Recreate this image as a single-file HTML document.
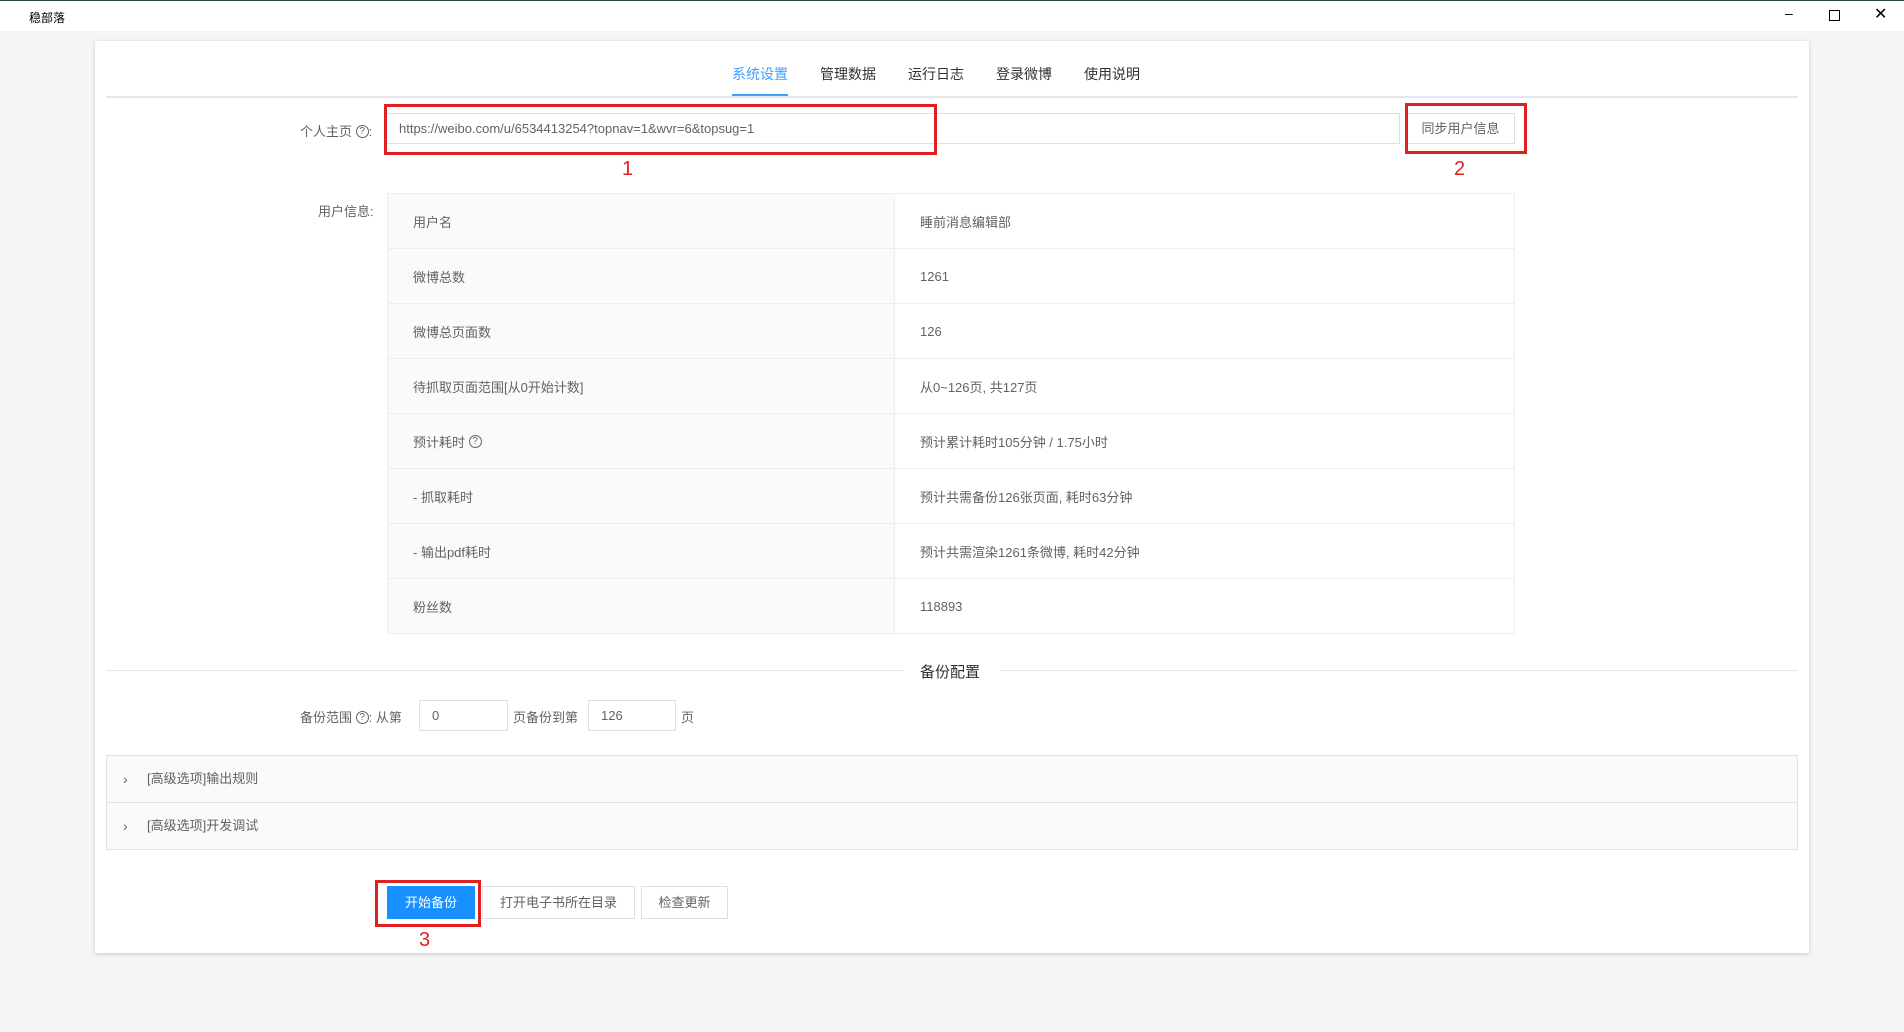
<!DOCTYPE html>
<html><head><meta charset="utf-8"><style>
*{box-sizing:border-box;margin:0;padding:0}
body{width:1904px;height:1032px;background:#f5f5f5;font-family:"Liberation Sans","Noto Sans CJK SC",sans-serif;color:#606266;font-size:13px;position:relative;overflow:hidden}
.abs{position:absolute}
.title{left:0;top:0;width:1904px;height:31px;background:#fff;border-top:1px solid #2d4a3a}
.card{left:95px;top:41px;width:1714px;height:912px;background:#fff;box-shadow:0 1px 4px rgba(0,0,0,.18)}
.tab{top:64px;font-size:14px;color:#303133}
.in{border:1px solid #dcdfe6;background:#fff;height:31px;line-height:29px;padding-left:12px;color:#606266;font-size:13px}
.red{border:3px solid #e02020}
.num{color:#e02020;font-size:20px}
table{border-collapse:collapse}
td{border:1px solid #ebeef5;height:55px;padding-left:25px;font-size:13px;color:#606266}
td.k{background:#fafafa;width:507px}
.q{display:inline-block;width:13px;height:13px;border:1px solid #606266;border-radius:50%;font-size:10px;line-height:11px;text-align:center;vertical-align:middle;margin-top:-3px}
.panel{left:106px;width:1692px;height:48px;background:#fafafa;border:1px solid #e0e0e0;line-height:46px;padding-left:40px;color:#606266;font-size:13px}
.btn{top:886px;height:33px;line-height:31px;border:1px solid #dcdfe6;background:#fff;text-align:center;font-size:13px;color:#606266}
</style></head><body>
<div class="abs title"><span class="abs" style="left:29px;top:8px;font-size:12px;color:#000">稳部落</span>
<span class="abs" style="left:1785px;top:4px;font-size:14px;color:#000">–</span>
<span class="abs" style="left:1829px;top:9px;width:11px;height:11px;border:1px solid #000"></span>
<span class="abs" style="left:1874px;top:3px;font-size:16px;color:#000">✕</span></div>
<div class="abs card"></div>
<span class="abs tab" style="left:732px;color:#409eff">系统设置</span>
<div class="abs" style="left:732px;top:94px;width:56px;height:3px;background:#409eff"></div>
<span class="abs tab" style="left:820px">管理数据</span>
<span class="abs tab" style="left:908px">运行日志</span>
<span class="abs tab" style="left:996px">登录微博</span>
<span class="abs tab" style="left:1084px">使用说明</span>
<div class="abs" style="left:106px;top:96px;width:1692px;height:2px;background:#e4e7ed"></div>

<span class="abs" style="left:300px;top:121px">个人主页 <span class="q">?</span>:</span>
<div class="abs in" style="left:386px;top:113px;width:1014px">https://weibo.com/u/6534413254?topnav=1&amp;wvr=6&amp;topsug=1</div>
<div class="abs in" style="left:1406px;top:113px;width:109px;padding:0;text-align:center">同步用户信息</div>
<div class="abs red" style="left:384px;top:104px;width:553px;height:51px"></div>
<div class="abs red" style="left:1405px;top:103px;width:122px;height:51px"></div>
<span class="abs num" style="left:622px;top:158px">1</span>
<span class="abs num" style="left:1454px;top:158px">2</span>

<span class="abs" style="left:318px;top:201px">用户信息:</span>
<table class="abs" style="left:387px;top:193px;width:1128px">
<tr><td class="k">用户名</td><td>睡前消息编辑部</td></tr>
<tr><td class="k">微博总数</td><td>1261</td></tr>
<tr><td class="k">微博总页面数</td><td>126</td></tr>
<tr><td class="k">待抓取页面范围[从0开始计数]</td><td>从0~126页, 共127页</td></tr>
<tr><td class="k">预计耗时 <span class="q">?</span></td><td>预计累计耗时105分钟 / 1.75小时</td></tr>
<tr><td class="k">- 抓取耗时</td><td>预计共需备份126张页面, 耗时63分钟</td></tr>
<tr><td class="k">- 输出pdf耗时</td><td>预计共需渲染1261条微博, 耗时42分钟</td></tr>
<tr><td class="k">粉丝数</td><td>118893</td></tr>
</table>

<div class="abs" style="left:106px;top:670px;width:798px;height:1px;background:#e4e7ed"></div>
<div class="abs" style="left:1000px;top:670px;width:798px;height:1px;background:#e4e7ed"></div>
<span class="abs" style="left:920px;top:661px;font-size:15px;color:#303133">备份配置</span>

<span class="abs" style="left:300px;top:707px">备份范围 <span class="q">?</span>: 从第</span>
<div class="abs in" style="left:419px;top:700px;width:89px;height:31px">0</div>
<span class="abs" style="left:513px;top:707px">页备份到第</span>
<div class="abs in" style="left:588px;top:700px;width:88px;height:31px">126</div>
<span class="abs" style="left:681px;top:707px">页</span>

<div class="abs panel" style="top:755px"><span class="abs" style="left:16px;top:0;font-size:14px">›</span>[高级选项]输出规则</div>
<div class="abs panel" style="top:802px"><span class="abs" style="left:16px;top:0;font-size:14px">›</span>[高级选项]开发调试</div>

<div class="abs btn" style="left:387px;width:88px;background:#1890ff;border-color:#1890ff;color:#fff">开始备份</div>
<div class="abs btn" style="left:482px;width:153px">打开电子书所在目录</div>
<div class="abs btn" style="left:641px;width:87px">检查更新</div>
<div class="abs red" style="left:375px;top:880px;width:106px;height:47px"></div>
<span class="abs num" style="left:419px;top:929px">3</span>
</body></html>
